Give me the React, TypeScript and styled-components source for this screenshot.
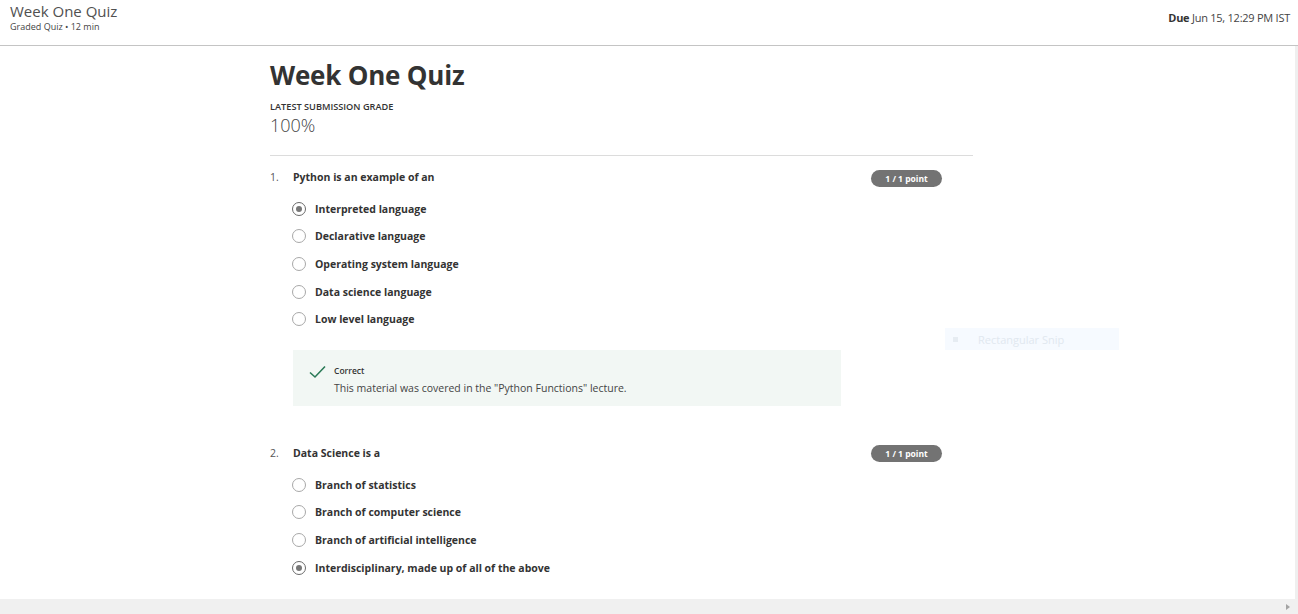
import React from "react";
import styled, { createGlobalStyle } from "styled-components";

const Global = createGlobalStyle`
  html, body { margin: 0; padding: 0; background: #fff; }
  body { font-family: "Open Sans", "Liberation Sans", sans-serif; color: #333; overflow: hidden; }
  * { box-sizing: border-box; }
`;

const Page = styled.div`
  width: 1298px;
  height: 614px;
  display: flex;
  flex-direction: column;
`;

const TopBar = styled.header`
  height: 46px;
  flex: none;
  display: flex;
  justify-content: space-between;
  align-items: flex-start;
  padding: 0 8px 0 10px;
  border-bottom: 1px solid #c4c4c4;
`;

const TopTitle = styled.div`
  font-size: 15px;
  line-height: 22px;
  font-weight: 400;
  color: #505050;
`;

const TopSub = styled.div`
  font-size: 9px;
  line-height: 10px;
  color: #444;
`;

const DueText = styled.div`
  margin-top: 11px;
  font-size: 11px;
  line-height: 14px;
  color: #444;
  letter-spacing: -0.25px;
  b { font-weight: 700; color: #333; }
`;

const Body = styled.div`
  flex: 1;
  display: flex;
  min-height: 0;
`;

const Main = styled.main`
  flex: 1;
  padding-left: 270px;
  position: relative;
  overflow: hidden;
`;

const SideTrack = styled.div`
  width: 3px;
  flex: none;
  background: #efefef;
`;

const Column = styled.div`
  width: 703px;
`;

const H1 = styled.h1`
  margin: 13px 0 0;
  font-size: 26px;
  line-height: 32px;
  font-weight: 700;
  color: #333;
  letter-spacing: -0.2px;
`;

const GradeLabel = styled.div`
  margin-top: 10px;
  font-size: 9.2px;
  line-height: 12px;
  font-weight: 600;
  color: #333;
  text-transform: uppercase;
`;

const GradeValue = styled.div`
  margin-top: 1px;
  font-size: 18px;
  line-height: 22px;
  font-weight: 300;
  color: #444;
`;

const Divider = styled.hr`
  margin: 19px 0 0;
  border: 0;
  border-top: 1px solid #dcdcdc;
`;

const Question = styled.section<{ $gap: number }>`
  margin-top: ${(p) => p.$gap}px;
`;

const QHead = styled.div`
  display: flex;
  align-items: center;
  height: 18px;
  padding-right: 31px;
`;

const QNum = styled.span`
  width: 23px;
  font-size: 10.5px;
  color: #555;
`;

const QText = styled.span`
  flex: 1;
  font-size: 10.5px;
  font-weight: 700;
  color: #333;
`;

const Badge = styled.span`
  width: 71px;
  height: 17px;
  border-radius: 9px;
  background: #737373;
  color: #fff;
  font-size: 8.5px;
  font-weight: 700;
  display: flex;
  align-items: center;
  justify-content: center;
  margin-top: 2px;
`;

const Options = styled.div`
  margin-top: 9px;
  padding-left: 22px;
  display: flex;
  flex-direction: column;
`;

const Option = styled.label`
  height: 27.6px;
  display: flex;
  align-items: center;
  gap: 9px;
  font-size: 10.5px;
  font-weight: 700;
  color: #333;
`;

const Radio = styled.span<{ $checked?: boolean }>`
  width: 14px;
  height: 14px;
  border-radius: 50%;
  border: ${(p) => (p.$checked ? "1.5px solid #6a6a6a" : "1px solid #a8a8a8")};
  display: flex;
  align-items: center;
  justify-content: center;
  &::after {
    content: "";
    width: 6px;
    height: 6px;
    border-radius: 50%;
    background: ${(p) => (p.$checked ? "#777" : "transparent")};
  }
`;

const Feedback = styled.div`
  margin: 17px 0 0 23px;
  width: 548px;
  height: 56px;
  background: #f2f7f4;
  display: flex;
  gap: 8px;
  padding: 14px 0 0 16px;
`;

const FbTitle = styled.div`
  font-size: 8.5px;
  line-height: 14px;
  font-weight: 600;
  color: #333;
`;

const FbText = styled.div`
  margin-top: 3px;
  font-size: 10.5px;
  line-height: 14px;
  color: #444;
`;

const SnipGhost = styled.div`
  position: absolute;
  left: 945px;
  top: 282px;
  width: 174px;
  height: 22px;
  background: #f6faff;
  display: flex;
  align-items: center;
  gap: 20px;
  padding-left: 8px;
  font-size: 11px;
  color: #e1e8ef;
  &::before {
    content: "";
    width: 5px;
    height: 5px;
    background: #e6ecf2;
  }
`;

const HScroll = styled.div`
  height: 15px;
  flex: none;
  background: #f0f0f0;
  display: flex;
  justify-content: flex-end;
  align-items: center;
  padding-right: 8px;
`;

const Arrow = styled.span`
  width: 0;
  height: 0;
  border-top: 3.5px solid transparent;
  border-bottom: 3.5px solid transparent;
  border-left: 4px solid #a3a3a3;
`;

const CheckIcon = () => (
  <svg width="17" height="14" viewBox="0 0 17 14" style={{ flex: "none", marginTop: 1 }}>
    <path d="M1 7.5 L6 12 L16 1.5" fill="none" stroke="#2b7a57" strokeWidth="1.6" />
  </svg>
);

type Q = { n: number; text: string; options: string[]; checked: number };

const questions: Q[] = [
  {
    n: 1,
    text: "Python is an example of an",
    options: [
      "Interpreted language",
      "Declarative language",
      "Operating system language",
      "Data science language",
      "Low level language",
    ],
    checked: 0,
  },
  {
    n: 2,
    text: "Data Science is a",
    options: [
      "Branch of statistics",
      "Branch of computer science",
      "Branch of artificial intelligence",
      "Interdisciplinary, made up of all of the above",
    ],
    checked: 3,
  },
];

export default function App() {
  return (
    <Page>
      <Global />
      <TopBar>
        <div>
          <TopTitle>Week One Quiz</TopTitle>
          <TopSub>Graded Quiz • 12 min</TopSub>
        </div>
        <DueText>
          <b>Due</b> Jun 15, 12:29 PM IST
        </DueText>
      </TopBar>
      <Body>
        <Main>
          <Column>
            <H1>Week One Quiz</H1>
            <GradeLabel>Latest Submission Grade</GradeLabel>
            <GradeValue>100%</GradeValue>
            <Divider />
            {questions.map((q, qi) => (
              <Question key={q.n} $gap={qi === 0 ? 12 : 38}>
                <QHead>
                  <QNum>{q.n}.</QNum>
                  <QText>{q.text}</QText>
                  <Badge>1 / 1 point</Badge>
                </QHead>
                <Options>
                  {q.options.map((o, i) => (
                    <Option key={o}>
                      <Radio $checked={i === q.checked} />
                      {o}
                    </Option>
                  ))}
                </Options>
                {qi === 0 && (
                  <Feedback>
                    <CheckIcon />
                    <div>
                      <FbTitle>Correct</FbTitle>
                      <FbText>This material was covered in the "Python Functions" lecture.</FbText>
                    </div>
                  </Feedback>
                )}
              </Question>
            ))}
          </Column>
          <SnipGhost>Rectangular Snip</SnipGhost>
        </Main>
        <SideTrack />
      </Body>
      <HScroll>
        <Arrow />
      </HScroll>
    </Page>
  );
}
